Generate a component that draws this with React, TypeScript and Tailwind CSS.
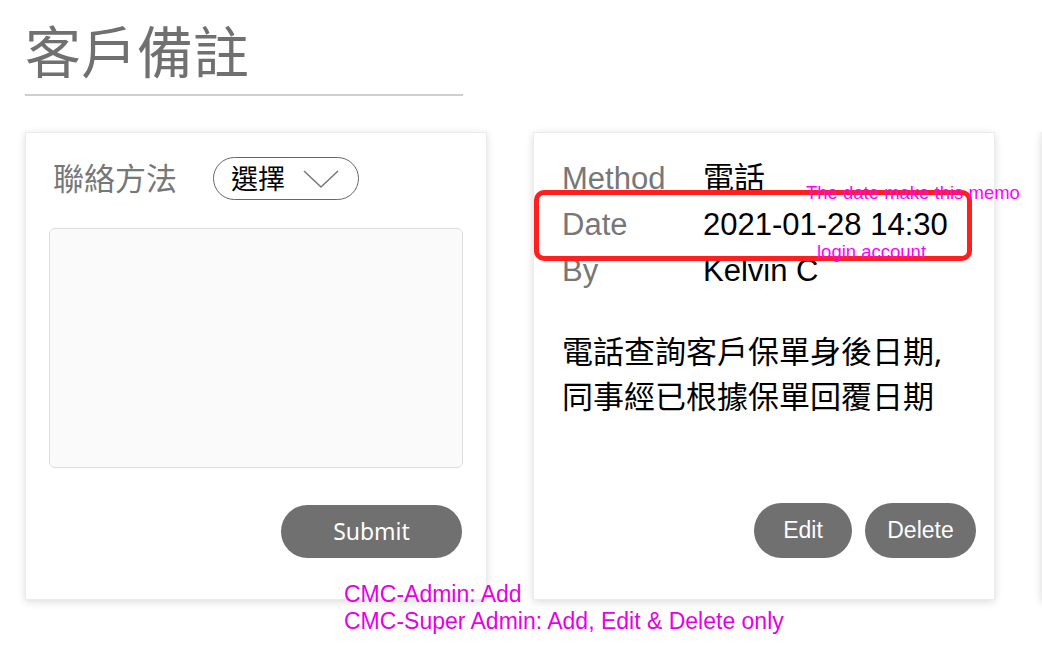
import { useState } from "react";

const cjk = "font-['Noto_Sans','Noto_Sans_CJK_TC',sans-serif]";
const helv = "font-['Liberation_Sans','Noto_Sans_CJK_TC',sans-serif]";

const cardBox =
  "relative w-[462px] h-[468px] shrink-0 bg-white border border-[#ececec] shadow-[0_2px_8px_rgba(0,0,0,0.14)]";

const MemoForm = () => {
  const [text, setText] = useState("");
  return (
    <div className={cardBox}>
      {/* contact method row */}
      <div className="flex items-center pl-[27px] pt-[24px]">
        <span className={`${cjk} text-[31px] leading-none text-[#777]`}>聯絡方法</span>
        <button className="ml-[36px] flex items-center h-[43px] w-[146px] rounded-full border-[1.5px] border-[#666] pl-[17px]">
          <span className={`${cjk} text-[27px] leading-none text-black`}>選擇</span>
          <svg width="36" height="20" viewBox="0 0 36 20" className="ml-[18px]">
            <path d="M1 2 L18 18 L35 2" fill="none" stroke="#777" strokeWidth="1.5" />
          </svg>
        </button>
      </div>

      <textarea
        value={text}
        onChange={(e) => setText(e.target.value)}
        className="block ml-[23px] mt-[28px] w-[414px] h-[240px] resize-none rounded-md border border-[#dcdcdc] bg-[#fafafa] outline-none"
      />

      <div className="flex justify-end pr-[24px] mt-[37px]">
        <button className="font-['Noto_Sans',sans-serif] h-[53px] w-[181px] rounded-full bg-[#707070] text-white text-[23px]">
          Submit
        </button>
      </div>
    </div>
  );
};

const InfoRow = ({ label, value }: { label: string; value: string }) => (
  <div className="flex items-center h-[46px]">
    <span className={`${helv} w-[141px] text-[31px] text-[#777]`}>{label}</span>
    <span className={`${helv} text-[31px] text-black`}>{value}</span>
  </div>
);

const MemoCard = () => (
  <div className={cardBox}>
    <div className="pl-[28px] pt-[23px]">
      <InfoRow label="Method" value="電話" />
      <InfoRow label="Date" value="2021-01-28 14:30" />
      <InfoRow label="By" value="Kelvin C" />
    </div>

    <p className={`${cjk} pl-[28px] mt-[35px] text-[31px] leading-[45px] text-black`}>
      電話查詢客戶保單身後日期,
      <br />
      同事經已根據保單回覆日期
    </p>

    {/* annotation box */}
    <div className="absolute left-0 top-[57px] w-[438px] h-[71px] rounded-[10px] border-[5px] border-[#ff1f1f]" />
    <span className={`${helv} absolute left-[272px] top-[51px] text-[18.5px] leading-none text-[#ff00ff] whitespace-nowrap`}>
      The date make this memo
    </span>
    <span className={`${helv} absolute left-[283px] top-[110px] text-[18.5px] leading-none text-[#ff00ff] whitespace-nowrap`}>
      login account
    </span>

    <div className="absolute right-[18px] bottom-[41px] flex gap-[13px]">
      <button className={`${helv} h-[55px] w-[98px] rounded-full bg-[#707070] text-white text-[23px]`}>Edit</button>
      <button className={`${helv} h-[55px] w-[111px] rounded-full bg-[#707070] text-white text-[23px]`}>Delete</button>
    </div>
  </div>
);

const App = () => {
  return (
    <div className="relative w-[1042px] h-[648px] overflow-hidden bg-white">
      <div className="pl-[25px] pt-[19px]">
        <h1 className={`${cjk} text-[56px] leading-[64px] text-[#707070]`}>客戶備註</h1>
        <div className="mt-[11px] w-[438px] h-[2px] bg-[#cfcfcf]" />
      </div>

      <div className="flex gap-[46px] pl-[25px] mt-[36px]">
        <MemoForm />
        <MemoCard />
        {/* next card, only its edge is on screen */}
        <div className={cardBox} />
      </div>

      <div className={`${helv} absolute left-[344px] top-[581px] text-[23px] leading-[27px] text-[#e600e6]`}>
        <div>CMC-Admin: Add</div>
        <div>CMC-Super Admin: Add, Edit &amp; Delete only</div>
      </div>
    </div>
  );
};

export default App;
